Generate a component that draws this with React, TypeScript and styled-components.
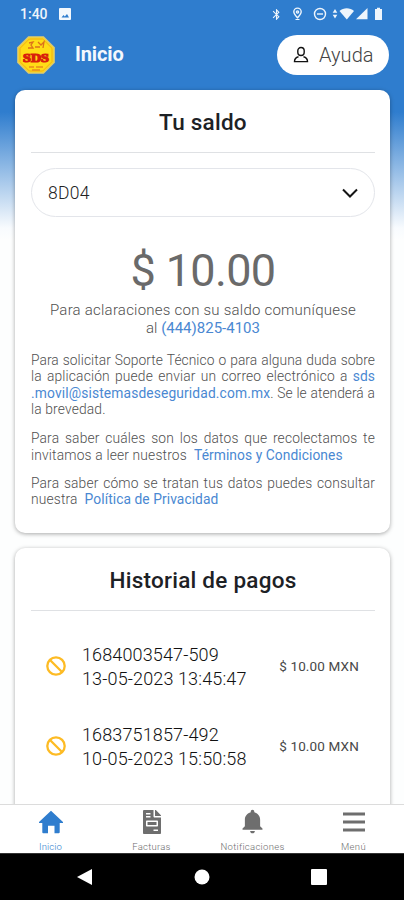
import React from "react";
import styled, { createGlobalStyle } from "styled-components";
import { FaFileInvoice } from "react-icons/fa";
import { IoMdNotifications } from "react-icons/io";
import { MdBluetooth } from "react-icons/md";

const BLUE = "#2f7dce";

const Global = createGlobalStyle`
  * { box-sizing: border-box; }
  body { margin: 0; background: #fff; font-family: Roboto, "Liberation Sans", sans-serif; }
  p, h1, h2 { margin: 0; }
  svg { display: block; flex: none; }
`;

const Screen = styled.div`
  width: 404px;
  height: 900px;
  overflow: hidden;
  display: flex;
  flex-direction: column;
  background: linear-gradient(${BLUE} 0, ${BLUE} 112px, #f8fbfe 228px, #fdfefe 240px);
`;

const StatusBar = styled.div`
  flex: none;
  height: 28px;
  padding: 0 20px 0 20px;
  display: flex;
  align-items: center;
  justify-content: space-between;
  color: #eef5fc;
`;

const StatusGroup = styled.div`
  display: flex;
  align-items: center;
`;

const Clock = styled.span`
  width: 28px;
  margin-right: 11px;
  font-size: 14px;
  font-weight: 500;
`;

const Header = styled.header`
  flex: none;
  height: 54px;
  padding: 0 15px 0 17px;
  display: flex;
  align-items: center;
`;

const HeaderTitle = styled.h1`
  flex: 1;
  margin-left: 20px;
  margin-top: -2px;
  font-size: 20px;
  line-height: 24px;
  font-weight: 700;
  letter-spacing: -0.1px;
  color: #f4f8fd;
`;

const HelpButton = styled.button`
  width: 112px;
  height: 40px;
  padding: 0 0 0 16px;
  border: 0;
  border-radius: 20px;
  background: #fff;
  display: flex;
  align-items: center;
  gap: 10px;
  font: 300 20px Roboto, sans-serif;
  letter-spacing: 0.05px;
  color: #444;
`;

const Content = styled.main`
  flex: 1;
  min-height: 0;
  overflow: hidden;
  padding: 8px 14px 0 15px;
  display: flex;
  flex-direction: column;
  gap: 15px;
`;

const Card = styled.section<{ $height: number }>`
  flex: none;
  height: ${(p) => p.$height}px;
  padding: 0 15px 0 16px;
  border-radius: 10px;
  background: #fff;
  box-shadow: 0 1px 4px rgba(0, 0, 0, 0.34);
`;

const CardTitle = styled.h2`
  height: 63px;
  border-bottom: 1px solid #dfe1e4;
  padding-top: 18px;
  text-align: center;
  font-size: 22.5px;
  line-height: 28px;
  font-weight: 500;
  letter-spacing: 0.25px;
  color: #1d2125;
`;

const Select = styled.div`
  height: 49px;
  margin-top: 15px;
  padding: 0 16px;
  border: 1px solid #e3e5ea;
  border-radius: 25px;
  display: flex;
  align-items: center;
  justify-content: space-between;
  font-size: 17.5px;
  font-weight: 300;
  letter-spacing: 0.3px;
  color: #222;
`;

const Amount = styled.p`
  margin-top: 26px;
  height: 56px;
  text-align: center;
  font-size: 45px;
  line-height: 56px;
  font-weight: 400;
  letter-spacing: -0.65px;
  color: #6a6a6a;
`;

const Contact = styled.div`
  margin-top: 2px;
  display: flex;
  flex-direction: column;
  align-items: center;
  font-size: 15px;
  line-height: 18px;
  font-weight: 300;
  color: #505050;
`;

const ContactLine = styled.p<{ $spacing: number }>`
  white-space: nowrap;
  letter-spacing: ${(p) => p.$spacing}px;
`;

const Link = styled.a<{ $spacing?: number }>`
  color: #4a88d2;
  font-weight: 400;
  letter-spacing: ${(p) => p.$spacing ?? 0.07}px;
`;

const Paragraph = styled.div<{ $gap: number }>`
  margin-top: ${(p) => p.$gap}px;
  font-size: 13.8px;
  line-height: 16.35px;
  font-weight: 300;
  color: #505050;
`;

const Line = styled.p<{ $spacing?: number; $justify?: boolean }>`
  white-space: nowrap;
  letter-spacing: ${(p) => p.$spacing ?? 0.15}px;
  text-align-last: ${(p) => (p.$justify ? "justify" : "left")};
`;

const Payment = styled.article`
  height: 80px;
  padding: 0 16px 0 15px;
  display: flex;
  align-items: center;
`;

const PaymentText = styled.div`
  flex: 1;
  margin-left: 16px;
  padding-top: 2px;
  font-size: 18px;
  line-height: 24px;
  font-weight: 300;
  letter-spacing: 0.13px;
  color: #111;
  white-space: nowrap;
`;

const PaymentAmount = styled.span`
  font-size: 13.5px;
  font-weight: 400;
  letter-spacing: 0.15px;
  color: #484848;
  white-space: nowrap;
`;

const PaymentList = styled.div`
  padding-top: 15px;
`;

const Tabs = styled.nav`
  flex: none;
  height: 49px;
  border-top: 1px solid #dcdcdc;
  background: #fff;
  display: grid;
  grid-template-columns: repeat(4, 1fr);
`;

const Tab = styled.div<{ $active?: boolean }>`
  display: flex;
  flex-direction: column;
  align-items: center;
  padding-top: 3px;
  color: ${(p) => (p.$active ? BLUE : "#6e6e6e")};
`;

const TabIcon = styled.div`
  height: 27px;
  display: flex;
  align-items: center;
`;

const TabLabel = styled.span<{ $spacing?: number }>`
  margin-top: 6px;
  font-size: 9.5px;
  line-height: 12px;
  font-weight: 300;
  letter-spacing: ${(p) => p.$spacing ?? 0.1}px;
`;

const SystemBar = styled.footer`
  flex: none;
  height: 47px;
  border-top: 1px solid #333;
  background: #000;
  display: flex;
  align-items: center;
  justify-content: space-between;
  padding: 0 77px 0 77px;
`;

const LogoText = styled.text`
  font-family: "Liberation Serif", serif;
  font-weight: 700;
  text-anchor: middle;
`;

const Logo = () => (
  <svg width="38" height="38" viewBox="0 0 38 38">
    <path d="M11.5.8h15L37.2 11.5v15L26.5 37.2h-15L.8 26.5v-15z" fill="#ffdc16" stroke="#d4c47c" strokeWidth="1.3" />
    <path d="M12.3 3h13.4L35 12.3v13.4L25.7 35H12.3L3 25.7V12.3z" fill="none" stroke="#eda51c" strokeWidth=".9" />
    <path d="M12 7l4-1-2 3 2 3h-5m7-1h5M21 6l3 3 3-3-1 6" fill="none" stroke="#dc711b" strokeWidth="1.3" />
    <LogoText x="19" y="25.500" fontSize="11.500" fill="#d91f0b" stroke="#d91f0b" strokeWidth="1.200" textLength="26" lengthAdjust="spacingAndGlyphs">SDS</LogoText>
    <path d="M12 31h5m2 0h7M15 34h8" stroke="#e98a1c" strokeWidth="1.5" />
  </svg>
);

const PhotoIcon = () => (
  <svg width="12" height="12" viewBox="0 0 12 12">
    <rect width="12" height="12" rx="1" fill="#f3f8fd" />
    <path d="M2.5 9.5L4.5 7l1.3 1.500L8 6l2 3.500z" fill={BLUE} />
  </svg>
);

const StatusIcons = () => (
  <svg width="101" height="16" viewBox="0 0 101 16" fill="none" stroke="currentColor" strokeWidth="1.400">
    <path d="M14.500 11.800c-2.300-2.500-3.700-4-3.700-6a3.700 3.700 0 0 1 7.400 0c0 2-1.400 3.500-3.700 6z" />
    <circle cx="14.500" cy="6" r="1.100" />
    <path d="M12.500 13.500h4" strokeWidth="1" />
    <circle cx="37" cy="8" r="5.500" />
    <path d="M34 8h6" />
    <g fill="currentColor" stroke="none">
      <path d="M52 3l2.300 3.800h-4.600zM52 12.500l2.300-3.800h-4.600z" />
      <path d="M56.500 5C60.500 1.200 67 1.200 71 5l-7.200 8.500z" />
      <path d="M73 13.200L84.500 2v11.200z" />
      <path d="M92 3h2V1.800h3V3h2v11h-7z" />
    </g>
  </svg>
);

const PersonIcon = () => (
  <svg width="16" height="18" viewBox="0 0 16 18" fill="none" stroke="#111" strokeWidth="1.4">
    <rect x="4.800" y="1.500" width="6.400" height="8" rx="3.200" />
    <path d="M5.500 10.800C3 11.400 1.500 12.500 1.500 15.600h13c0-3.100-1.500-4.200-4-4.800" />
  </svg>
);

const BlockedIcon = () => (
  <svg width="20" height="20" viewBox="0 0 20 20" fill="none" stroke="#fdbb24" strokeWidth="2.300">
    <circle cx="10" cy="10" r="8.700" />
    <path d="M4 4l12 12" />
  </svg>
);

const HomeIcon = () => (
  <svg width="26" height="24" viewBox="0 0 26 24" fill={BLUE}>
    <path d="M13 .8L25 12v1h-3.300v9.300c0 .5-.4.900-.9.900h-4.300v-7.400H10v7.400H5.200c-.5 0-.9-.4-.9-.9V13H1v-1z" />
  </svg>
);

const payments = [
  { id: "1684003547-509", date: "13-05-2023 13:45:47", amount: "$ 10.00 MXN" },
  { id: "1683751857-492", date: "10-05-2023 15:50:58", amount: "$ 10.00 MXN" },
];

export default function App() {
  return (
    <>
      <Global />
      <Screen>
        <StatusBar>
          <StatusGroup>
            <Clock>1:40</Clock>
            <PhotoIcon />
          </StatusGroup>
          <StatusGroup>
            <MdBluetooth size={13} />
            <StatusIcons />
          </StatusGroup>
        </StatusBar>
        <Header>
          <Logo />
          <HeaderTitle>Inicio</HeaderTitle>
          <HelpButton>
            <PersonIcon />
            Ayuda
          </HelpButton>
        </Header>
        <Content>
          <Card $height={443}>
            <CardTitle>Tu saldo</CardTitle>
            <Select>
              8D04
              <svg width="16" height="10" viewBox="0 0 16 10" fill="none" stroke="#151515" strokeWidth="2">
                <path d="M1 1.500l7 7 7-7" />
              </svg>
            </Select>
            <Amount>$ 10.00</Amount>
            <Contact>
              <ContactLine $spacing={0.23}>Para aclaraciones con su saldo comuníquese</ContactLine>
              <ContactLine $spacing={0}>
                al <Link $spacing={0}>(444)825-4103</Link>
              </ContactLine>
            </Contact>
            <Paragraph $gap={15}>
              <Line $justify $spacing={0.05}>Para solicitar Soporte Técnico o para alguna duda sobre</Line>
              <Line $justify>
                la aplicación puede enviar un correo electrónico a <Link>sds</Link>
              </Line>
              <Line $justify $spacing={0}>
                <Link $spacing={0.13}>.movil@sistemasdeseguridad.com.mx</Link>. Se le atenderá a
              </Line>
              <Line>la brevedad.</Line>
            </Paragraph>
            <Paragraph $gap={13}>
              <Line $justify>Para saber cuáles son los datos que recolectamos te</Line>
              <Line $spacing={0.17}>
                invitamos a leer nuestros &nbsp;<Link>Términos y Condiciones</Link>
              </Line>
            </Paragraph>
            <Paragraph $gap={12}>
              <Line $justify>Para saber cómo se tratan tus datos puedes consultar</Line>
              <Line>
                nuestra &nbsp;<Link>Política de Privacidad</Link>
              </Line>
            </Paragraph>
          </Card>
          <Card $height={280}>
            <CardTitle>Historial de pagos</CardTitle>
            <PaymentList>
              {payments.map((p) => (
                <Payment key={p.id}>
                  <BlockedIcon />
                  <PaymentText>
                    <p>{p.id}</p>
                    <p>{p.date}</p>
                  </PaymentText>
                  <PaymentAmount>{p.amount}</PaymentAmount>
                </Payment>
              ))}
            </PaymentList>
          </Card>
        </Content>
        <Tabs>
          <Tab $active>
            <TabIcon><HomeIcon /></TabIcon>
            <TabLabel>Inicio</TabLabel>
          </Tab>
          <Tab>
            <TabIcon><FaFileInvoice size={24} /></TabIcon>
            <TabLabel $spacing={0.25}>Facturas</TabLabel>
          </Tab>
          <Tab>
            <TabIcon><IoMdNotifications size={29} /></TabIcon>
            <TabLabel $spacing={0.3}>Notificaciones</TabLabel>
          </Tab>
          <Tab>
            <TabIcon>
              <svg width="22" height="20" viewBox="0 0 22 20" fill="currentColor">
                <path d="M0 .5h22v3H0zM0 8.500h22v3H0zM0 16.500h22v3H0z" />
              </svg>
            </TabIcon>
            <TabLabel $spacing={0.35}>Menú</TabLabel>
          </Tab>
        </Tabs>
        <SystemBar>
          <svg width="16" height="16" viewBox="0 0 16 16" fill="#fff"><path d="M0 8L15 0v16z" /></svg>
          <svg width="16" height="16" viewBox="0 0 16 16" fill="#fff"><circle cx="8" cy="8" r="7.500" /></svg>
          <svg width="16" height="16" viewBox="0 0 16 16" fill="#fff"><rect width="16" height="16" rx="1" /></svg>
        </SystemBar>
      </Screen>
    </>
  );
}
